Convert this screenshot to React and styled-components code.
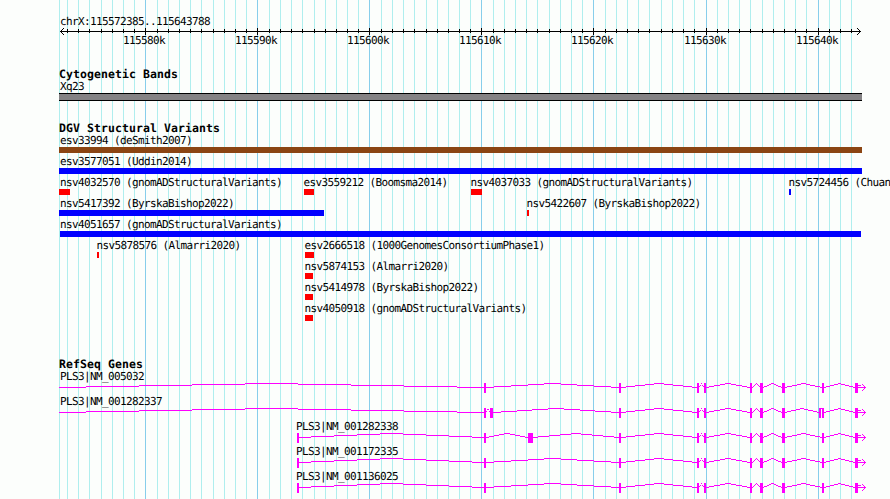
import React from 'react'
import styled, { createGlobalStyle } from 'styled-components';

const GlobalStyle = createGlobalStyle`
body {
  margin: 0;
  background: #fcfefc;
}
`;

const LEFT = 59;
const WIDTH = 803;

const Browser = styled.div`
position: relative;
width: 890px;
height: 499px;
overflow: hidden;
background: #fcfefc;
color: #000;
font-family: "DejaVu Sans Mono", "Liberation Mono", monospace;
font-size: 11px;
line-height: 12px;
letter-spacing: -0.623px;
white-space: pre;
text-rendering: geometricPrecision;
`;

// grid lines lie behind every track
const GridLines = styled.svg`
position: absolute;
top: 0;
left: 0;
`;

const Tracks = styled.div`
position: relative;
display: flex;
flex-direction: column;
`;

const Region = styled.div`
padding: 16px 0 0 60px;
height: 11px;
`;

const Axis = styled.svg`
display: block;
width: 890px;
height: 8px;
`;

const AxisLabels = styled.div`
display: grid;
height: 12px;
`;

const Track = styled.section`
padding-top: ${props => props.gap}px;
`;

const Title = styled.h2`
margin: 0;
padding-left: ${LEFT}px;
height: 13px;
font-size: 11.5px;
font-weight: bold;
line-height: 13px;
letter-spacing: 0.077px;
`;

const Label = styled.div`
grid-area: 1 / 1;
margin-left: ${props => props.x}px;
height: 12px;
`;

const Band = styled.div`
box-sizing: border-box;
width: ${WIDTH}px;
height: 8px;
margin-left: ${LEFT}px;
background: #848284;
border: solid #000;
border-width: 1px 0;
`;

const Row = styled.div`
display: grid;
grid-template-rows: 12px 6px;
height: 21px;
`;

const Bar = styled.div`
grid-area: 2 / 1;
width: ${props => props.w}px;
margin-left: ${props => props.x}px;
background: ${props => props.color};
`;

const GeneRow = styled.div`
height: 25px;
`;

const Model = styled.svg`
display: block;
width: 890px;
height: 11px;
`;

const major = [145, 257, 369, 481, 593, 706, 818];
const minor = [
  59, 67, 78, 89, 101, 112, 123, 134,
  157, 168, 179, 190, 201, 213, 224, 235, 246,
  269, 280, 291, 302, 314, 325, 336, 347, 358,
  381, 392, 403, 414, 426, 437, 448, 459, 470,
  493, 504, 515, 526, 537, 549, 560, 571, 582,
  605, 616, 627, 638, 649, 661, 672, 683, 694,
  717, 728, 739, 750, 762, 773, 784, 795, 806,
  829, 840, 851
];

const BLUE = '#0000ff';
const RED = '#ff0000';
const BROWN = '#8b4513';

const variants = [
  [{ x: 59, w: 803, color: BROWN, name: 'esv33994 (deSmith2007)' }],
  [{ x: 59, w: 803, color: BLUE, name: 'esv3577051 (Uddin2014)' }],
  [
    { x: 59, w: 11, color: RED, name: 'nsv4032570 (gnomADStructuralVariants)' },
    { x: 304, w: 10, color: RED, name: 'esv3559212 (Boomsma2014)' },
    { x: 471, w: 11, color: RED, name: 'nsv4037033 (gnomADStructuralVariants)' },
    { x: 789, w: 2, color: BLUE, name: 'nsv5724456 (Chuang2021)' }
  ],
  [
    { x: 59, w: 265, color: BLUE, name: 'nsv5417392 (ByrskaBishop2022)' },
    { x: 527, w: 2, color: RED, name: 'nsv5422607 (ByrskaBishop2022)' }
  ],
  [{ x: 60, w: 801, color: BLUE, name: 'nsv4051657 (gnomADStructuralVariants)' }],
  [
    { x: 97, w: 2, color: RED, name: 'nsv5878576 (Almarri2020)' },
    { x: 305, w: 9, color: RED, name: 'esv2666518 (1000GenomesConsortiumPhase1)' }
  ],
  [{ x: 305, w: 8, color: RED, name: 'nsv5874153 (Almarri2020)' }],
  [{ x: 305, w: 8, color: RED, name: 'nsv5414978 (ByrskaBishop2022)' }],
  [{ x: 305, w: 8, color: RED, name: 'nsv4050918 (gnomADStructuralVariants)' }]
];

// [start, width] of each exon
const tail = [[619, 2], [697, 2], [704, 2], [750, 2], [760, 3], [782, 3], [822, 2], [855, 3]];
const tailExtra = [[619, 2], [697, 2], [704, 2], [750, 2], [760, 3], [782, 3], [819, 2], [822, 2], [855, 3]];

const genes = [
  { name: 'PLS3|NM_005032', x: 60, exons: [[59, 0], [484, 2], ...tail] },
  { name: 'PLS3|NM_001282337', x: 60, exons: [[59, 0], [484, 2], [490, 3], ...tailExtra] },
  { name: 'PLS3|NM_001282338', x: 296, exons: [[297, 2], [484, 2], [528, 5], ...tail] },
  { name: 'PLS3|NM_001172335', x: 296, exons: [[297, 2], [484, 2], ...tail] },
  { name: 'PLS3|NM_001136025', x: 296, exons: [[297, 2], [484, 2], ...tail] }
];

// stepped intron line which rises four pixels to the middle
const intron = (from, to) => {
  const half = (to - from) / 2;
  const cuts = [0, 0.125, 0.375, 0.625, 0.875, 1.125, 1.375, 1.625, 1.875, 2];
  const rise = [0, 1, 2, 3, 4, 3, 2, 1, 0];
  return rise.map((r, i) => {
    const a = Math.round(from + cuts[i] * half);
    const b = Math.round(from + cuts[i + 1] * half);
    return b > a ? `M${a} ${4.5 - r}H${b}` : '';
  }).join('');
}

const Gene = ({ gene }) => {
  const { exons } = gene;
  return (
    <GeneRow>
      <Label x={gene.x}>{gene.name}</Label>
      <Model viewBox="0 0 890 11" shapeRendering="crispEdges">
        <g fill="none" stroke="#ff00ff">
          {exons.slice(1).map((e, i) => (
            <path key={e[0]} d={intron(exons[i][0] + exons[i][1], e[0])} />
          ))}
          <path d="M858 4.5H866M858 2.5H861" />
        </g>
        <g fill="#ff00ff">
          {exons.map(e => <rect key={e[0]} x={e[0]} y="0" width={e[1]} height="10" />)}
          <path d="M862 1h1v1h1v1h1v1h1v1h-1v1h-1v1h-1v1h-1v-1h1v-1h1v-1h1v-1h-1v-1h-1v-1h-1z" />
        </g>
      </Model>
    </GeneRow>
  )
}

const App = () => {
  return (
    <>
      <GlobalStyle />
      <Browser>
        <GridLines width="890" height="499" shapeRendering="crispEdges">
          {minor.map(x => <rect key={x} x={x} y="0" width="1" height="499" fill="#afeeee" />)}
          {major.map(x => <rect key={x} x={x} y="0" width="1" height="499" fill="#87ceeb" />)}
        </GridLines>
        <Tracks>
          <Region>chrX:115572385..115643788</Region>
          <Axis viewBox="0 0 890 8" shapeRendering="crispEdges">
            <path d="M60 4.5H861" stroke="#000" />
            {minor.slice(1).map(x => <rect key={x} x={x} y="2" width="1" height="4" />)}
            {major.map(x => <rect key={x} x={x} y="1" width="1" height="7" />)}
            <path d="M63 1h1v1h-1v1h-1v1h-1v1h1v1h1v1h1v1h-1v-1h-1v-1h-1v-1h-1v-1h1v-1h1v-1h1z" />
            <path d="M857 1h1v1h1v1h1v1h1v1h-1v1h-1v1h-1v1h-1v-1h1v-1h1v-1h1v-1h-1v-1h-1v-1h-1z" />
          </Axis>
          <AxisLabels>
            {major.map((x, i) => <Label key={x} x={x - 22}>{`115${580 + i * 10}k`}</Label>)}
          </AxisLabels>

          <Track gap={21}>
            <Title>Cytogenetic Bands</Title>
            <Label x={60}>Xq23</Label>
            <Band />
          </Track>

          <Track gap={21}>
            <Title>DGV Structural Variants</Title>
            {variants.map((row, i) => (
              <Row key={i}>
                {row.map(v => (
                  <React.Fragment key={v.name}>
                    <Label x={Math.max(60, v.x - 0.5)}>{v.name}</Label>
                    <Bar x={v.x} w={v.w} color={v.color} />
                  </React.Fragment>
                ))}
              </Row>
            ))}
          </Track>

          <Track gap={34}>
            <Title>RefSeq Genes</Title>
            {genes.map(g => <Gene key={g.name} gene={g} />)}
          </Track>
        </Tracks>
      </Browser>
    </>
  )
}

export default App
